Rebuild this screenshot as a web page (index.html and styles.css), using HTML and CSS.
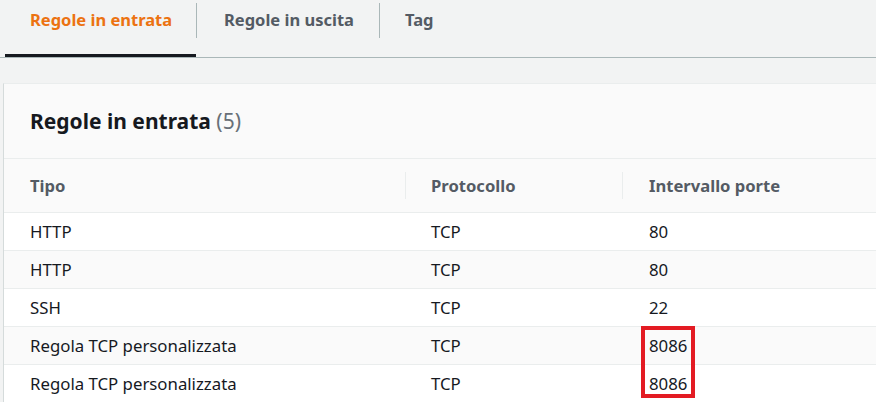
FILE: index.html
```html
<!DOCTYPE html>
<html lang="it">
<head>
<meta charset="utf-8">
<title>Regole in entrata</title>
<link rel="stylesheet" href="styles.css">
</head>
<body>
<nav class="tabs">
  <div class="tab tab-1 active">Regole in entrata</div>
  <span class="tab-divider"></span>
  <div class="tab tab-2">Regole in uscita</div>
  <span class="tab-divider"></span>
  <div class="tab tab-3">Tag</div>
</nav>
<section class="panel">
  <header class="panel-header">
    <h2 class="panel-title">Regole in entrata <span class="count">(5)</span></h2>
  </header>
  <div class="table">
    <div class="row head">
      <div class="cell">Tipo</div>
      <div class="cell sep">Protocollo</div>
      <div class="cell sep">Intervallo porte</div>
    </div>
    <div class="row">
      <div class="cell">HTTP</div><div class="cell">TCP</div><div class="cell">80</div>
    </div>
    <div class="row alt">
      <div class="cell">HTTP</div><div class="cell">TCP</div><div class="cell">80</div>
    </div>
    <div class="row">
      <div class="cell">SSH</div><div class="cell">TCP</div><div class="cell">22</div>
    </div>
    <div class="row alt">
      <div class="cell">Regola TCP personalizzata</div><div class="cell">TCP</div><div class="cell marked">8086<span class="highlight"></span></div>
    </div>
    <div class="row">
      <div class="cell">Regola TCP personalizzata</div><div class="cell">TCP</div><div class="cell">8086</div>
    </div>
  </div>
</section>
</body>
</html>
```
FILE: styles.css
```css
html, body {
  margin: 0;
  padding: 0;
}
body {
  background: #f2f3f3;
  font-family: "Noto Sans", "Open Sans", sans-serif;
  color: #16191f;
  overflow: hidden;
  height: 402px;
}
.tabs {
  display: flex;
  height: 57px;
  border-bottom: 1px solid #aab7b8;
}
.tab {
  position: relative;
  box-sizing: border-box;
  height: 57px;
  padding-top: 9px;
  font-size: 16.5px;
  line-height: 22px;
  font-weight: 700;
  color: #545b64;
}
.tab-1 {
  margin-left: 5px;
  width: 191px;
  padding-left: 25px;
}
.tab-2 {
  width: 182px;
  padding-left: 27px;
}
.tab-3 {
  padding-left: 25px;
}
.tab.active {
  color: #ec7211;
}
.tab.active::after {
  content: "";
  position: absolute;
  left: 0;
  right: 0;
  bottom: 0;
  height: 3px;
  background: #16191f;
}
.tab-divider {
  align-self: flex-start;
  margin-top: 3px;
  width: 1px;
  height: 35px;
  background: #aab7b8;
}
.panel {
  margin: 25px 0 0 3px;
  background: #fafafa;
  border-left: 1px solid #d5dbdb;
  border-top: 1px solid #eaeded;
}
.panel-header {
  height: 74px;
  display: flex;
  align-items: center;
  padding-left: 26px;
  border-bottom: 1px solid #eaeded;
}
.panel-title {
  margin: 0;
  font-size: 21px;
  line-height: 24px;
  font-weight: 700;
  color: #16191f;
}
.count {
  font-weight: 400;
  color: #687078;
}
.row {
  display: grid;
  grid-template-columns: 401px 217px 1fr;
  height: 38px;
  box-sizing: border-box;
  border-top: 1px solid #eaeded;
  background: #ffffff;
  font-size: 16.8px;
  line-height: 37px;
}
.row.alt {
  background: #fafafa;
}
.row.head {
  border-top: none;
  height: 53px;
  line-height: 53px;
  background: #fafafa;
  font-size: 16.6px;
  font-weight: 700;
  color: #545b64;
}
.cell {
  position: relative;
  padding-left: 26px;
  white-space: nowrap;
}
.row .cell:nth-child(3) {
  padding-left: 27px;
}
.cell.sep::before {
  content: "";
  position: absolute;
  left: 0;
  top: 13px;
  width: 1px;
  height: 27px;
  background: #eaeded;
}
.cell.sep {
  padding-left: 26px;
}
.highlight {
  position: absolute;
  left: 19px;
  top: -1px;
  width: 54px;
  height: 72px;
  box-sizing: border-box;
  border: 4px solid #e31b23;
}
```
